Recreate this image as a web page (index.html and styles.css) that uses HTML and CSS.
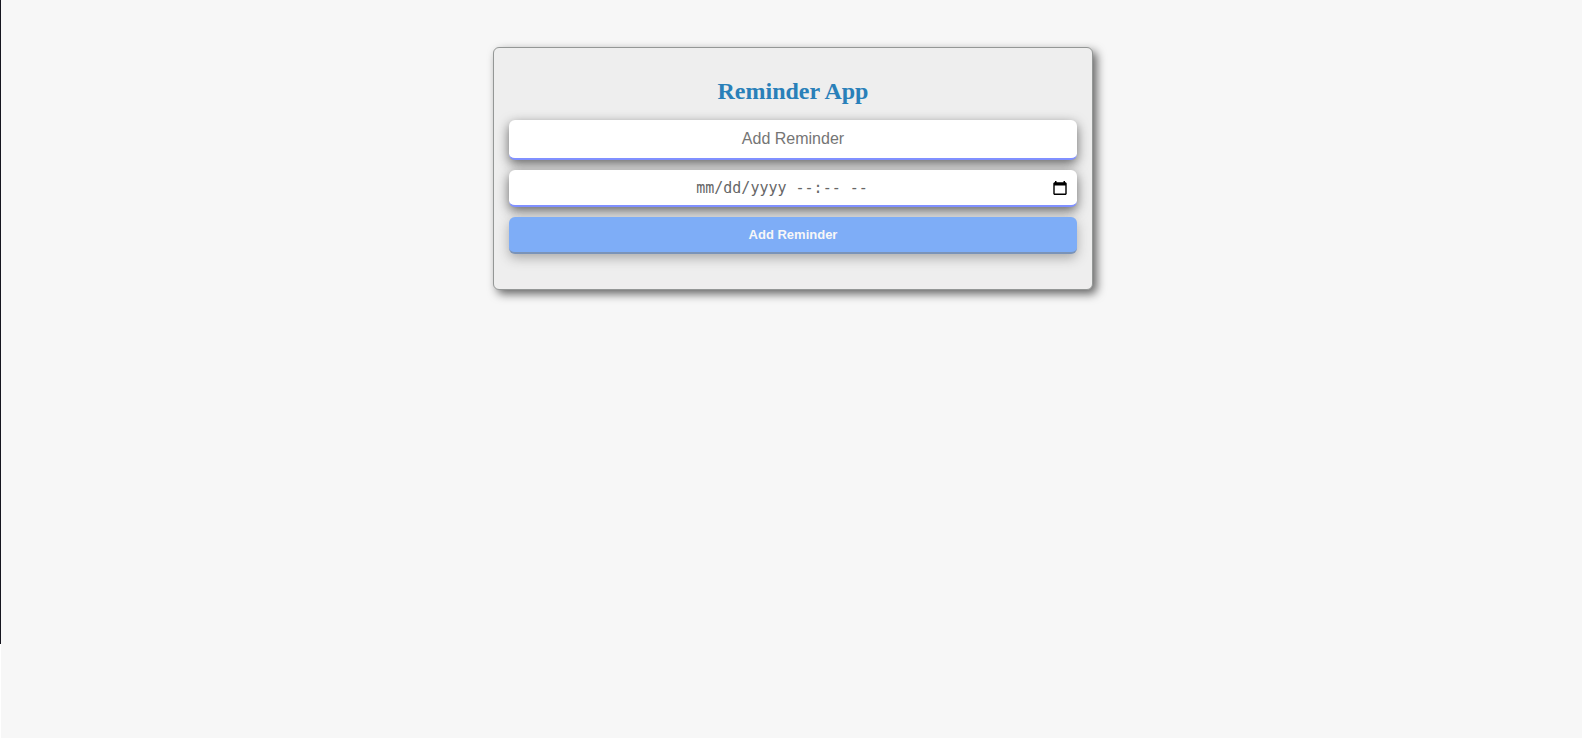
FILE: index.html
```
<!DOCTYPE html>
<html lang="en">
<head>
<meta charset="utf-8">
<title>Reminder App</title>
<link rel="stylesheet" href="styles.css">
</head>
<body>
<div class="edge"></div>
<main class="page">
<section class="card">
<h1 class="title">Reminder App</h1>
<form class="form">
<input class="field field-text" type="text" placeholder="Add Reminder" aria-label="Reminder">
<div class="field field-date">
<input class="date-input" type="text" placeholder="mm/dd/yyyy --:-- --" aria-label="Date and time">
<button class="picker" type="button" aria-label="Show date picker">
<svg width="14" height="16" viewBox="0 0 14 16"><path fill="#000" d="M2 1h1.5v1.3h7V1H12v1.3h.8l.9.9v10.9l-.9.9H1.2l-.9-.9V3.2l.9-.9H2zM1.7 5.6v8h10.6v-8z" fill-rule="evenodd"/></svg>
</button>
</div>
<button class="submit" type="button">Add Reminder</button>
</form>
</section>
</main>
</body>
</html>
```

FILE: styles.css
```
* { box-sizing: border-box; }
body {
  display: flex;
  margin: 0;
  min-height: 100vh;
  background: #f7f7f7;
  font-family: "Liberation Serif", serif;
}
.edge {
  width: 1px;
  background: linear-gradient(#15151f 0 644px, #fff 644px);
}
.page {
  flex: 1;
  padding: 47px 0 0 3px;
}
.card {
  width: 90%;
  max-width: 600px;
  margin: 0 auto;
  padding: 15px 15px 35px;
  background: #eee;
  border: 1px solid #949796;
  border-radius: 6px;
  box-shadow: 4px 4px 10px #666;
}
.title {
  margin: 14px 0 15px;
  font-size: 24px;
  line-height: 28px;
  text-align: center;
  color: #2980b9;
}
.form {
  display: flex;
  flex-direction: column;
  gap: 10px;
}
.field {
  width: 100%;
  border: 0;
  border-bottom: 2px solid #8090ff;
  border-radius: 6px;
  background: #fff;
  box-shadow: 0 4px 12px #666;
}
.field-text {
  height: 40px;
  padding: 10px;
  font-family: "Liberation Sans", sans-serif;
  font-size: 16px;
  text-align: center;
}
.field-date {
  display: flex;
  align-items: center;
  height: 37px;
  padding: 0 10px;
}
.date-input {
  flex: 1;
  min-width: 0;
  padding: 0;
  border: 0;
  background: transparent;
  font-family: "DejaVu Sans Mono", monospace;
  font-size: 15px;
  text-align: center;
}
.date-input::placeholder { color: #666; }
.picker {
  display: flex;
  padding: 0 0 0 8px;
  border: 0;
  background: transparent;
}
.submit {
  height: 37px;
  padding: 0;
  border: 0;
  border-bottom: 2px solid #7a93b8;
  border-radius: 6px;
  background: #7eadf7;
  color: #f7f7f7;
  font: bold 13px "Liberation Sans", sans-serif;
  box-shadow: 0 4px 12px #aaa;
}
```
